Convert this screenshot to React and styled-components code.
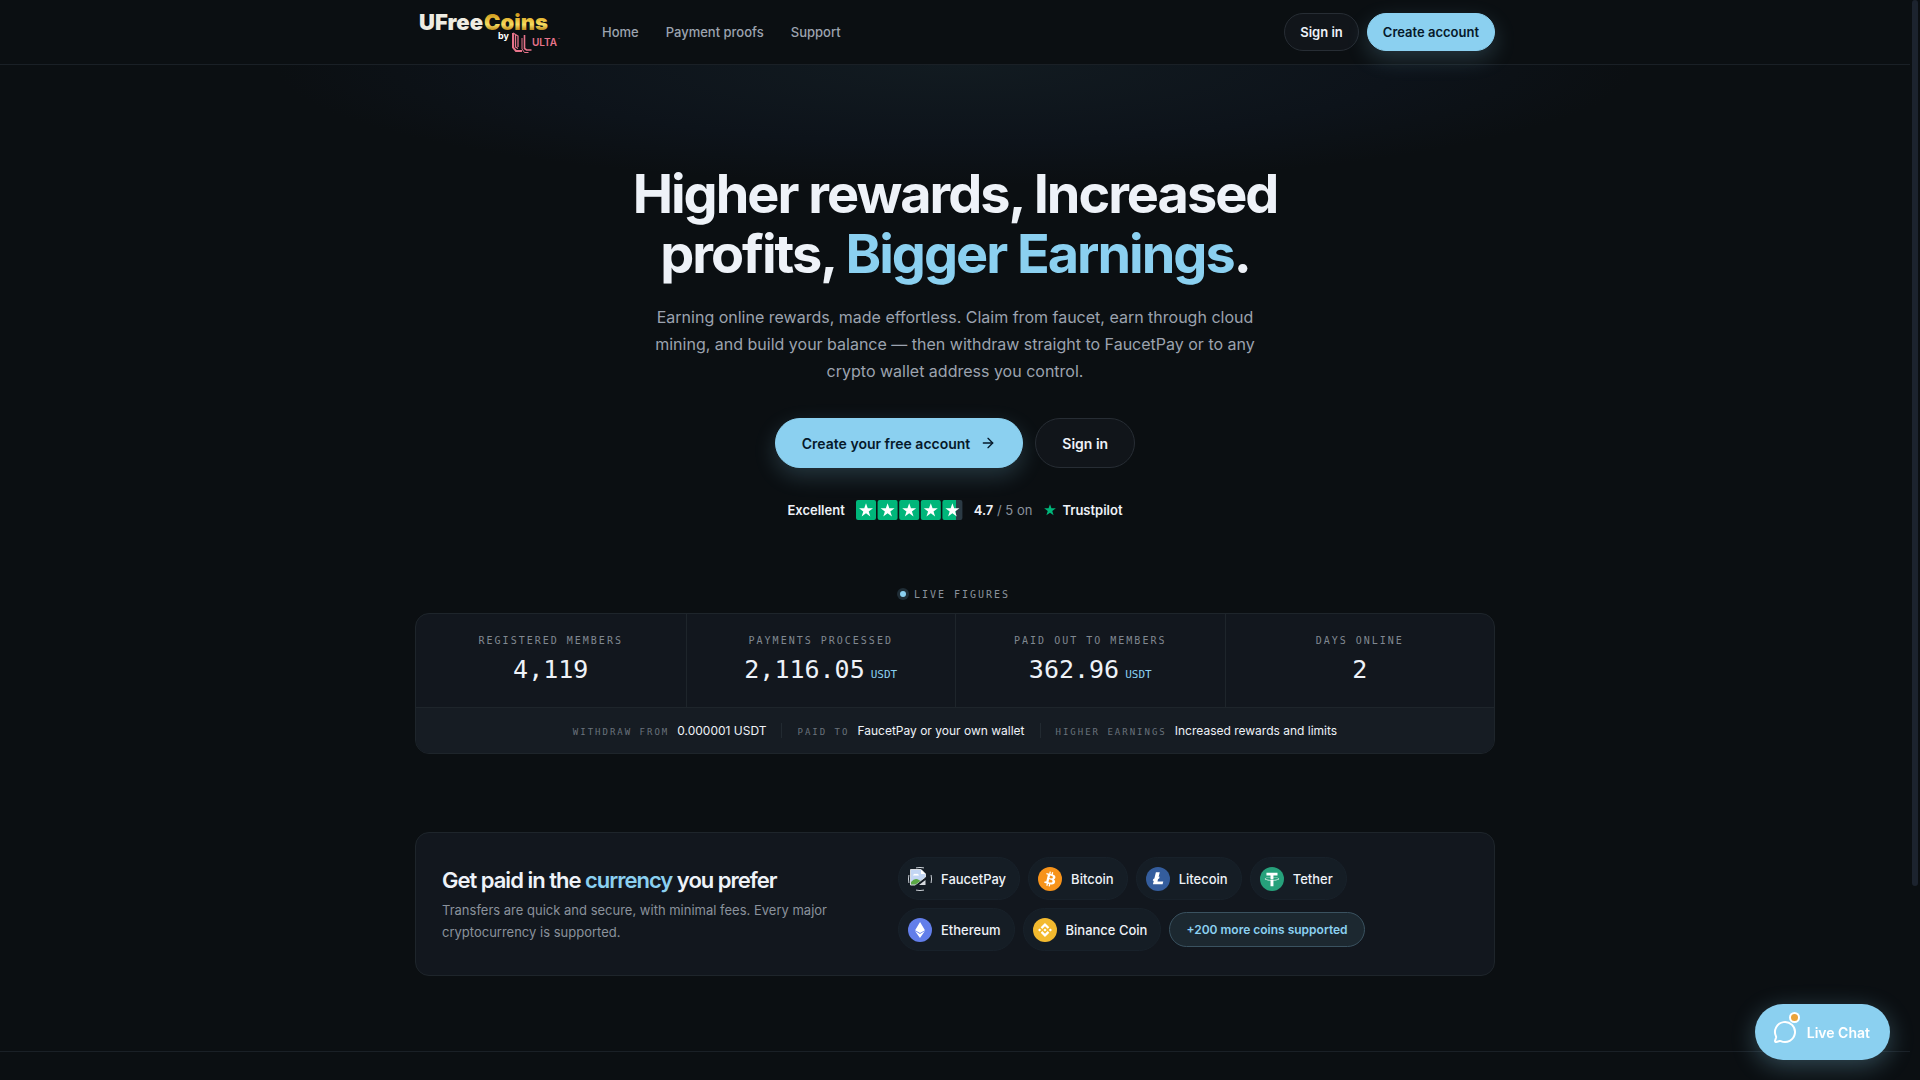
import styled, { createGlobalStyle } from 'styled-components'
import { ArrowRight, MessageCircle } from 'lucide-react'
import { SiBinance, SiEthereum } from 'react-icons/si'

const sans = `Inter, 'Liberation Sans', sans-serif`
const mono = `'DejaVu Sans Mono', 'Liberation Mono', monospace`

const stats = [
    { label: 'Registered members', value: '4,119' },
    { label: 'Payments processed', value: '2,116.05', unit: 'USDT' },
    { label: 'Paid out to members', value: '362.96', unit: 'USDT' },
    { label: 'Days online', value: '2' },
]

const facts = [
    { label: 'Withdraw from', value: '0.000001 USDT' },
    { label: 'Paid to', value: 'FaucetPay or your own wallet' },
    { label: 'Higher earnings', value: 'Increased rewards and limits' },
]

const STAR = 'M12 2l2.500 7.200H22l-6.100 4.500 2.300 7.300-6.200-4.500L5.800 21l2.300-7.300L2 9.200h7.500z'

const Logo = () => (
    <svg width="146" height="44" viewBox="0 0 146 44" role="img" aria-label="UFreeCoins by Ulta">
        <defs>
            <linearGradient id="gold" x1="0" y1="0" x2="0" y2="1">
                <stop offset=".1" stopColor="#c08a12" />
                <stop offset=".4" stopColor="#e9bd3a" />
                <stop offset=".6" stopColor="#f6dc62" />
                <stop offset=".85" stopColor="#b47c10" />
            </linearGradient>
        </defs>
        <text x="4" y="20" fontFamily={sans} fontWeight="900" fontSize="22" fill="#eeece2">UFree</text>
        <text x="69" y="20" fontFamily={sans} fontWeight="900" fontSize="22" fill="url(#gold)">Coins</text>
        <text x="83" y="29" fontFamily={sans} fontWeight="700" fontSize="9" fill="#fff">by</text>
        <g stroke="#e8748b" fill="none">
            <path d="M98 23v14.500l3 3.500h6" strokeWidth="2" />
            <path d="M98 23l5 3v11M100.500 25v12l2.500 1.500" strokeWidth="1.300" />
            <path d="M109.500 25v13.500l2 1.500h5" strokeWidth="1.600" />
            <path d="M107 28v11l2.500 3.500h4" strokeWidth="1" />
        </g>
        <text x="117" y="36" fontFamily={sans} fontWeight="600" fontSize="10" fill="#e8748b">ULTA</text>
        <text x="143" y="31" fontFamily={sans} fontSize="3" fill="#e8748b">™</text>
    </svg>
)

const Stars = () => (
    <svg width="107" height="20" viewBox="0 0 107 20" role="img" aria-label="4.7 out of 5 stars">
        <defs>
            <linearGradient id="part">
                <stop offset=".7" stopColor="#00b67a" />
                <stop offset=".7" stopColor="#2b3a44" />
            </linearGradient>
        </defs>
        {[0, 1, 2, 3, 4].map((n) => (
            <g key={n} transform={`translate(${n * 21.600} 0)`}>
                <rect width="20" height="20" rx="2" fill={n === 4 ? 'url(#part)' : '#00b67a'} />
                <path transform="translate(1.600 1.800) scale(.7)" d={STAR} fill="#fff" />
            </g>
        ))}
    </svg>
)

const BrokenImage = () => (
    <svg width="24" height="24" viewBox="0 0 24 24" aria-hidden="true">
        <path d="M8 .9q4-.9 8 0M8 23.100q4 .9 8 0M.9 8q-.9 4 0 8M23.100 8q.9 4 0 8" fill="none" stroke="#c8ced4" />
        <path d="M2.500 2.500h10.500l4.500 4.500v3L7 18H2.500z" fill="#c3d6f4" stroke="#d7dbe0" />
        <path d="M5 8.500a2 2 0 0 1 3-1.500 2 2 0 0 1 3 1.500z" fill="#fff" />
        <path d="M3 15q4-5 8-2l1.500 1-5 3.500H3z" fill="#5aa845" />
        <path d="M13 2.500v4.500h4.500z" fill="#fff" />
        <path d="M17.500 13v5H11z" fill="#d7dbe0" />
    </svg>
)

const glyph = (d) => ({ size }) => (
    <svg width={size} height={size} viewBox="0 0 32 32" fill="currentColor" aria-hidden="true"><path d={d} /></svg>
)

const BitcoinGlyph = glyph('M23.189 14.020c.314-2.096-1.283-3.223-3.465-3.975l.708-2.840-1.728-.430-.690 2.765c-.454-.114-.920-.220-1.385-.326l.695-2.783L15.596 6l-.708 2.839c-.376-.086-.746-.170-1.104-.260l.002-.009-2.384-.595-.460 1.846s1.283.294 1.256.312c.700.175.826.638.805 1.006l-.806 3.235c.048.012.110.030.180.057l-.183-.045-1.130 4.532c-.086.212-.303.531-.793.410.018.025-1.256-.313-1.256-.313l-.858 1.978 2.250.561c.418.105.828.215 1.231.318l-.715 2.872 1.727.430.708-2.840c.472.127.930.245 1.378.357l-.706 2.828 1.728.430.715-2.866c2.948.558 5.164.333 6.097-2.333.752-2.146-.037-3.385-1.588-4.192 1.130-.260 1.980-1.003 2.207-2.538zm-3.950 5.538c-.533 2.147-4.148.986-5.320.695l.950-3.805c1.172.293 4.929.872 4.370 3.110zm.535-5.569c-.487 1.953-3.495.960-4.470.717l.860-3.450c.975.243 4.118.696 3.610 2.733z')
const LitecoinGlyph = glyph('M10.427 18.214L9 18.768l.688-2.759 1.444-.580L13.213 7h5.129l-1.519 6.196 1.410-.571-.680 2.750-1.427.571-.848 3.483H23L22.127 23H9.252z')
const TetherGlyph = glyph('M17.922 17.383v-.002c-.110.008-.677.042-1.942.042-1.010 0-1.721-.030-1.971-.042v.003c-3.888-.171-6.790-.848-6.790-1.658 0-.809 2.902-1.486 6.790-1.660v2.644c.254.018.982.061 1.988.061 1.207 0 1.812-.050 1.925-.060v-2.643c3.880.173 6.775.850 6.775 1.658 0 .810-2.895 1.485-6.775 1.657m0-3.590v-2.366h5.414V7.819H8.595v3.608h5.414v2.365c-4.400.202-7.709 1.074-7.709 2.118 0 1.044 3.309 1.915 7.709 2.118v7.582h3.913v-7.584c4.393-.202 7.694-1.073 7.694-2.116 0-1.043-3.301-1.914-7.694-2.117')

const coins = [
    { name: 'FaucetPay' },
    { name: 'Bitcoin', color: '#f7931a', icon: BitcoinGlyph, size: 24 },
    { name: 'Litecoin', color: '#345d9d', icon: LitecoinGlyph, size: 24 },
    { name: 'Tether', color: '#26a17b', icon: TetherGlyph, size: 24 },
    { name: 'Ethereum', color: '#627eea', icon: SiEthereum, size: 16 },
    { name: 'Binance Coin', color: '#f3ba2f', icon: SiBinance, size: 14 },
]

const App = () => {
    return (
        <Shell>
            <GlobalStyle />
            <Page>
                <Header>
                    <Bar>
                        <Logo />
                        <Nav>
                            <NavLink href="#home">Home</NavLink>
                            <NavLink href="#proofs">Payment proofs</NavLink>
                            <NavLink href="#support">Support</NavLink>
                        </Nav>
                        <Button>Sign in</Button>
                        <Button $primary>Create account</Button>
                    </Bar>
                </Header>
                <Hero>
                    <Title>Higher rewards, Increased profits, <Accent>Bigger Earnings</Accent>.</Title>
                    <Desc>Earning online rewards, made effortless. Claim from faucet, earn through cloud mining, and build your balance — then withdraw straight to FaucetPay or to any crypto wallet address you control.</Desc>
                    <Actions>
                        <Button $primary $large>Create your free account <ArrowRight size={16} /></Button>
                        <Button $large>Sign in</Button>
                    </Actions>
                    <Rating>
                        <strong>Excellent</strong>
                        <Stars />
                        <span><strong>4.7</strong> / 5 on</span>
                        <Brand>
                            <svg width="14" height="14" viewBox="0 0 24 24" aria-hidden="true"><path d={STAR} fill="#00b67a" /></svg>
                            Trustpilot
                        </Brand>
                    </Rating>
                </Hero>
                <Live><Dot />Live figures</Live>
                <Card>
                    <StatGrid>
                        {stats.map((s) => (
                            <Stat key={s.label}>
                                <Label>{s.label}</Label>
                                <Value>{s.value}{s.unit && <Unit>{s.unit}</Unit>}</Value>
                            </Stat>
                        ))}
                    </StatGrid>
                    <Facts>
                        {facts.map((f) => (
                            <Fact key={f.label}><FactLabel>{f.label}</FactLabel>{f.value}</Fact>
                        ))}
                    </Facts>
                </Card>
                <PayCard>
                    <div>
                        <SubTitle>Get paid in the <Accent>currency</Accent> you prefer</SubTitle>
                        <Note>Transfers are quick and secure, with minimal fees. Every major cryptocurrency is supported.</Note>
                    </div>
                    <Coins>
                        {coins.map(({ name, color, icon: Icon, size }) => (
                            <Coin key={name}>
                                {Icon ? <CoinIcon $color={color}><Icon size={size} /></CoinIcon> : <BrokenImage />}
                                {name}
                            </Coin>
                        ))}
                        <More href="#coins">+200 more coins supported</More>
                    </Coins>
                </PayCard>
                <NextSection />
            </Page>
            <ScrollTrack><ScrollThumb /></ScrollTrack>
            <Chat>
                <ChatIcon><MessageCircle size={24} /><Alert /></ChatIcon>
                Live Chat
            </Chat>
        </Shell>
    )
}

export default App;

const GlobalStyle = createGlobalStyle`
* {
    box-sizing: border-box;
}
body {
    margin: 0;
    background: #0b0f12;
    color: #eef2f8;
    font-family: ${sans};
}
`

const Shell = styled.div`
display: flex;
height: 100vh;
overflow: hidden;
`
const Page = styled.main`
flex: 1;
min-width: 0;
`
const ScrollTrack = styled.div`
width: 10px;
padding: 0 2px;
background: #0b0f12;
`
const ScrollThumb = styled.div`
height: 82%;
border-radius: 4px;
background: #1c232e;
`
const Header = styled.header`
border-bottom: 1px solid #1a2026;
`
const Bar = styled.div`
display: flex;
align-items: center;
gap: 8px;
max-width: 1080px;
height: 64px;
margin: 0 auto;
`
const Nav = styled.nav`
display: flex;
flex: 1;
gap: 27px;
margin-left: 33px;
`
const NavLink = styled.a`
color: #9ca3af;
font-size: 13px;
font-weight: 500;
text-decoration: none;
`
const Button = styled.button`
display: flex;
align-items: center;
gap: 10px;
height: ${props => props.$large ? '50px' : '38px'};
padding: ${props => props.$large ? '0 26px' : '0 15px'};
border: 1px solid ${props => props.$primary ? '#8bd0f0' : '#272d34'};
border-radius: 25px;
background: ${props => props.$primary ? '#8bd0f0' : '#11151a'};
box-shadow: ${props => props.$primary ? '0 8px 22px rgba(139, 208, 240, 0.2)' : 'none'};
color: ${props => props.$primary ? '#06192a' : '#eef2f8'};
font-family: inherit;
font-size: ${props => props.$large ? '14px' : '13px'};
font-weight: 600;
cursor: pointer;
`
const Hero = styled.section`
display: flex;
flex-direction: column;
align-items: center;
padding: 99px 24px 0;
text-align: center;
background: radial-gradient(ellipse 680px 120px at 50% 0, #121b21, #0d131a 65%, transparent);
`
const Title = styled.h1`
max-width: 720px;
margin: 0;
font-size: 54px;
font-weight: 700;
line-height: 60px;
letter-spacing: -2px;
`
const Accent = styled.span`
color: #8bd0f0;
`
const Desc = styled.p`
max-width: 620px;
margin: 20px 0 0;
color: #9ca3af;
font-size: 16px;
line-height: 27px;
`
const Actions = styled.div`
display: flex;
gap: 12px;
margin-top: 33px;
`
const Rating = styled.div`
display: flex;
align-items: center;
gap: 11px;
height: 20px;
margin-top: 32px;
color: #8a929c;
font-size: 13px;

strong {
    color: #eef2f8;
    font-weight: 600;
}
`
const Brand = styled.span`
display: flex;
align-items: center;
gap: 5px;
color: #eef2f8;
font-weight: 600;
`
const Live = styled.div`
display: flex;
align-items: center;
justify-content: center;
gap: 8px;
height: 16px;
margin-top: 66px;
color: #8a929c;
font-family: ${mono};
font-size: 10px;
letter-spacing: 2px;
text-transform: uppercase;
`
const Dot = styled.span`
width: 6px;
height: 6px;
border-radius: 50%;
background: #8bd0f0;
box-shadow: 0 0 0 3px #1f2d36;
`
const Card = styled.section`
max-width: 1080px;
margin: 11px auto 0;
overflow: hidden;
border: 1px solid #1e252b;
border-radius: 14px;
background: #12171e;
`
const StatGrid = styled.div`
display: grid;
grid-template-columns: repeat(4, 1fr);
height: 94px;
border-bottom: 1px solid #1e252b;
`
const Stat = styled.div`
padding-top: 19px;
text-align: center;

& + & {
    border-left: 1px solid #1e252b;
}
`
const Label = styled.div`
color: #808891;
font-family: ${mono};
font-size: 10px;
line-height: 16px;
letter-spacing: 2px;
text-transform: uppercase;
`
const Value = styled.div`
margin-top: 5px;
font-family: ${mono};
font-size: 25px;
line-height: 32px;
`
const Unit = styled.span`
margin-left: 6px;
color: #8bd0f0;
font-size: 11px;
`
const Facts = styled.div`
display: flex;
align-items: center;
justify-content: center;
height: 45px;
background: #161c23;
`
const Fact = styled.div`
display: flex;
align-items: baseline;
gap: 8px;
padding: 0 15px;
font-size: 12px;

& + & {
    border-left: 1px solid #222a31;
}
`
const FactLabel = styled.span`
color: #69727b;
font-family: ${mono};
font-size: 9px;
letter-spacing: 2px;
text-transform: uppercase;
`
const PayCard = styled.section`
display: grid;
grid-template-columns: 428px 1fr;
align-items: center;
gap: 28px;
max-width: 1080px;
margin: 78px auto 0;
padding: 24px 26px;
border: 1px solid #1e252b;
border-radius: 14px;
background: #12171e;
`
const SubTitle = styled.h2`
margin: 0;
font-size: 22px;
font-weight: 600;
line-height: 28px;
letter-spacing: -1px;
`
const Note = styled.p`
max-width: 400px;
margin: 5px 0 0;
color: #8a929c;
font-size: 13px;
line-height: 22px;
`
const Coins = styled.div`
display: flex;
flex-wrap: wrap;
align-items: center;
gap: 8px;
max-width: 490px;
`
const Coin = styled.div`
display: flex;
align-items: center;
gap: 9px;
height: 43px;
padding: 0 13px 0 9px;
border: 1px solid #18212a;
border-radius: 22px;
background: #151d25;
font-size: 13px;
font-weight: 500;
`
const CoinIcon = styled.span`
display: flex;
align-items: center;
justify-content: center;
width: 24px;
height: 24px;
border-radius: 50%;
background: ${props => props.$color};
color: #fff;
`
const More = styled.a`
display: flex;
align-items: center;
height: 35px;
padding: 0 16px;
border: 1px solid #3a5260;
border-radius: 18px;
background: #1c2830;
color: #8bd0f0;
font-size: 12px;
font-weight: 600;
text-decoration: none;
`
const NextSection = styled.section`
margin-top: 75px;
border-top: 1px solid #1a2026;
`
const Chat = styled.button`
position: fixed;
right: 30px;
bottom: 20px;
display: flex;
align-items: center;
gap: 10px;
height: 56px;
padding: 0 20px 0 18px;
border: 0;
border-radius: 28px;
background: #8bd0f0;
box-shadow: 0 6px 24px rgba(139, 208, 240, 0.3);
color: #fff;
font-family: inherit;
font-size: 14px;
font-weight: 600;
`
const ChatIcon = styled.span`
position: relative;
display: flex;
`
const Alert = styled.span`
position: absolute;
top: -8px;
right: -3px;
width: 11px;
height: 11px;
border: 2px solid #fff;
border-radius: 50%;
background: #eaa33b;
`
